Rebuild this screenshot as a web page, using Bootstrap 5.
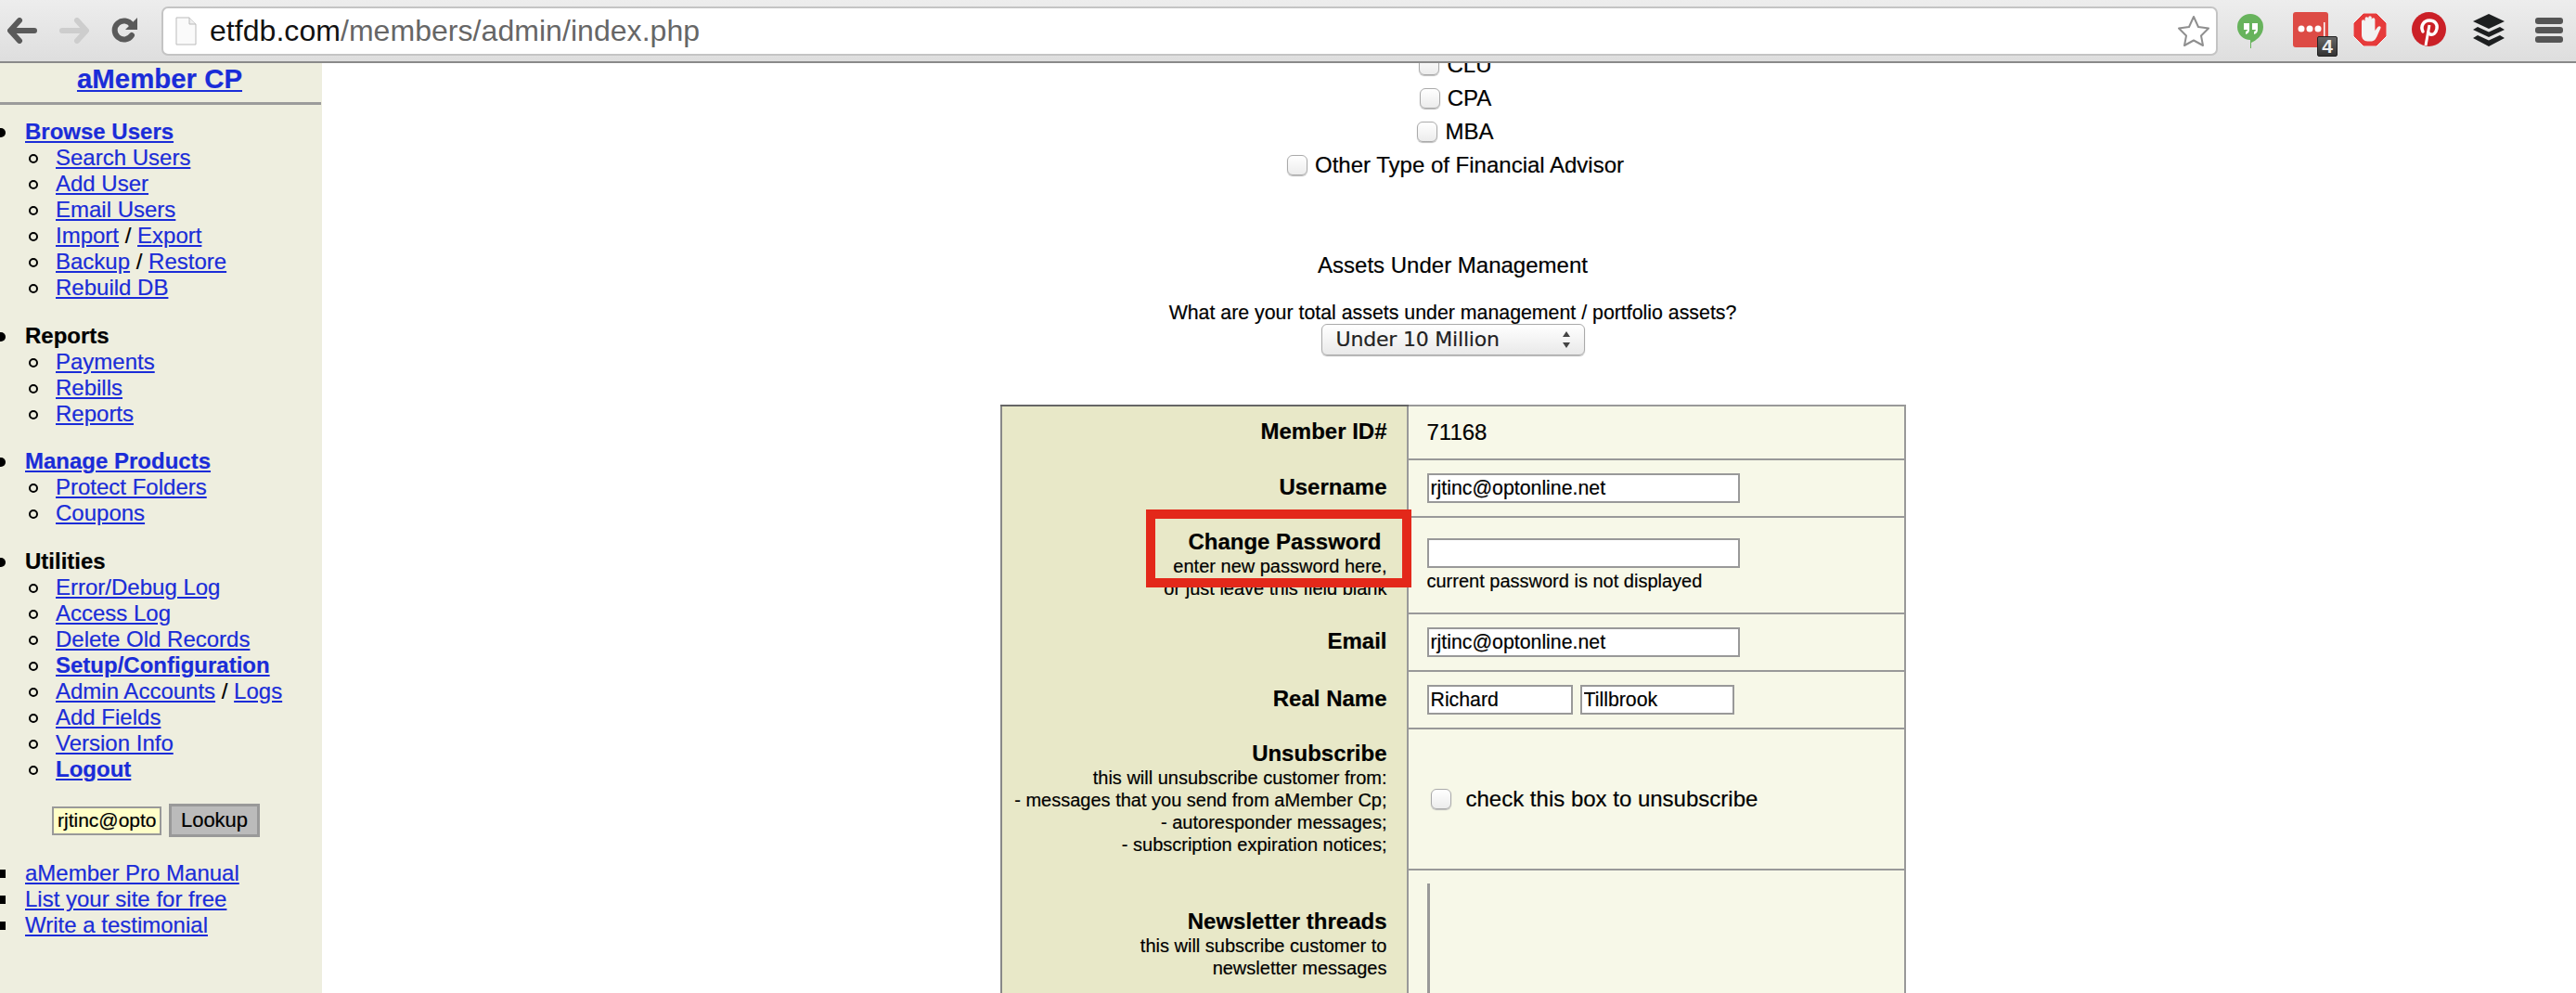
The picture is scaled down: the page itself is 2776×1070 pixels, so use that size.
<!DOCTYPE html>
<html lang="en">
<head>
<meta charset="utf-8">
<title>aMember CP</title>
<link href="https://cdn.jsdelivr.net/npm/bootstrap@5.3.0/dist/css/bootstrap.min.css" rel="stylesheet">
<style>
html,body{height:100%;overflow:hidden}
body{font-family:"Liberation Sans",Arial,sans-serif;font-size:24px;line-height:28px;color:#000;background:#fff;-webkit-text-stroke:.2px}
a{color:#1a2cd8}
.chrome-bar{height:68px;background:linear-gradient(#ededed,#dedede);border-bottom:2px solid #8a8a8a;padding-left:8px;padding-right:14px}
.nav-ico{flex:none;display:block}
.addr{width:2218px;height:53px;margin-left:24px;background:#fff;border:2px solid #c4c4c4;border-radius:7px;padding-left:13px;padding-right:6px}
.addr-url{font-size:32px;line-height:40px;margin-left:14px;color:#666;letter-spacing:.05px;-webkit-text-stroke:0}
.addr-url b{font-weight:400;color:#111}
.ext-row{margin-left:21px;height:68px}
.stage{height:1002px;overflow:hidden}
.side{flex:none;width:347px;height:100%;background:#eeeedf;overflow:hidden}
.side-title{font-size:29.4px;line-height:34px;font-weight:700;text-align:center;margin:0;padding-right:3px}
.side-rule{height:3px;background:#9b9b9b;margin:8px 1px 15px 0;opacity:1;border:0}
.lv1,.lv2,.lv3{list-style:none;margin:0}
.lv1{padding-left:27px;margin-bottom:23.5px}
.lv2{padding-left:33px}
.lv3{padding-left:27px}
.lv1>li,.lv2>li,.lv3>li{position:relative}
.lv1>li::before{content:"";position:absolute;left:-31px;top:10px;width:10px;height:10px;border-radius:50%;background:#000}
.lv2>li::before{content:"";position:absolute;left:-29px;top:10px;width:10px;height:10px;border-radius:50%;border:2px solid #000}
.lv3>li::before{content:"";position:absolute;left:-27px;top:10px;width:6px;height:9px;background:#000}
.lookup{padding-left:56px;margin-top:3px;margin-bottom:25px;gap:8px}
.lookup-in{width:118px;height:31px;background:#ffffc8;border:2px solid #999;font-size:21px;padding:0 4px;font-family:inherit;border-radius:0}
.lookup-btn{width:98px;height:36px;padding:0;background:#bbb;border:3px solid #999;border-radius:0;font-size:22px;line-height:28px;color:#000;-webkit-text-stroke:.2px}
.main-col{flex:1 1 auto;min-width:0;padding-left:8px;text-align:center;overflow:hidden}
.opt-line{height:36px;line-height:36px;gap:8px;padding-left:6px}
.opt-first{margin-top:-16px}
.opt-box{width:22px;height:22px;margin:0;flex:none;float:none;border:1.5px solid #aaa;border-radius:5px;background:linear-gradient(#fff,#ececec);box-shadow:0 1px 1px #bbb}
.assets-h{margin-top:76px;line-height:28px}
.assets-q{font-size:21.33px;line-height:26px;margin-top:24px}
.assets-sel{display:block;width:284px;height:34px;margin:-1px auto 0;padding:0 0 0 15px;font-family:"DejaVu Sans",sans-serif;font-size:22px;line-height:30px;letter-spacing:-.2px;color:#222;border:1.5px solid #aaa;border-radius:6px;box-shadow:0 1px 1px #bbb;appearance:none;background:url("data:image/svg+xml,%3Csvg xmlns='http://www.w3.org/2000/svg' width='10' height='18'%3E%3Cpath d='M5 0l4 6H1zM5 18l4-6H1z' fill='%23444'/%3E%3C/svg%3E") no-repeat right 14px center,linear-gradient(#fff,#e9e9e9)}
.member-tbl{width:976px;table-layout:fixed;border-collapse:collapse;margin:53px auto 0;text-align:left}
.member-tbl td{padding:0;vertical-align:middle}
.lab{width:438px;background:#e8e8c8;border-left:2px solid #888;border-top:2px solid #666;border-bottom:0;text-align:right;padding-right:21px!important;padding-bottom:3px!important;font-size:20px;line-height:24px;position:relative}
.lab-cont{border-top:0}
.lab strong{display:block;font-size:24px;line-height:28px}
.val{background:#f7f8e8;border:2px solid #999;padding-left:20px!important;font-size:24px}
.r1{height:58px}.r2{height:62px}.r3{height:104px}.r4{height:62px}.r5{height:62px}.r6{height:152px}.r7{height:300px}
.fld{display:block;height:32px;width:337px;border:2px solid #999;background:#fff;font-family:inherit;font-size:21.3px;padding:2px;color:#000;border-radius:0}
.fld-a{width:157px}.fld-b{width:166px}
.pw-note{font-size:20px;line-height:24px;margin-top:2px}
.red-mark{position:absolute;left:155px;top:-8px;width:286px;height:84px;border:10px solid #e3281a;pointer-events:none}
.pw-head{margin-right:6px}
.nl-cell{vertical-align:top!important;padding-top:42px!important}
.nl-list{display:block;width:3px;height:400px;background:#999;margin-top:14px}
.val-top{vertical-align:top!important}
.badge-num{position:absolute;left:26px;top:26px;width:22px;height:22px;background:linear-gradient(#666,#333);border:1px solid #222;border-radius:2px;color:#eee;font:700 21px/20px "Liberation Sans",sans-serif;text-align:center;-webkit-text-stroke:0}
.ext-pass{position:relative;width:48px;height:48px;margin-top:14px;margin-left:32px}
.ico-hang{margin-top:16px}
.ico-block{margin:15px 0 0 17px}
.ico-pin{margin:14px 0 0 27px}
.ico-buf{margin:16px 0 0 29px}
.ico-menu{margin:19px 0 0 33px}
</style>
</head>
<body>
<div class="chrome-bar d-flex align-items-center">
  <svg class="nav-ico" width="32" height="28" viewBox="0 0 32 28"><path d="M13 3L3 14l10 11M4 14h25" fill="none" stroke="#5a5a5a" stroke-width="6" stroke-linecap="round" stroke-linejoin="round"/></svg>
  <svg class="nav-ico ms-4" width="32" height="28" viewBox="0 0 32 28"><path d="M19 3l10 11-10 11M28 14H3" fill="none" stroke="#cdcdcd" stroke-width="6" stroke-linecap="round" stroke-linejoin="round"/></svg>
  <svg class="nav-ico ms-4" width="30" height="30" viewBox="0 0 30 30"><path d="M22 20a10 10 0 1 1 0-11" fill="none" stroke="#5a5a5a" stroke-width="6" stroke-linecap="round"/><path d="M28 1v13H15z" fill="#5a5a5a"/></svg>
  <div class="addr d-flex align-items-center">
    <svg width="23" height="31" viewBox="0 0 23 31"><path d="M1 1h14l7 7v22H1z" fill="#fafafa" stroke="#bbb"/><path d="M15 1v7h7" fill="#eee" stroke="#bbb"/></svg>
    <span class="addr-url"><b>etfdb.com</b>/members/admin/index.php</span>
    <svg class="ms-auto" width="36" height="35" viewBox="0 0 36 35"><path d="M18 2l5 11 11 1.500-8 8 2 10.500-10-5.500-10 5.500 2-10.500-8-8L13 13z" fill="#fff" stroke="#8f8f8f" stroke-width="2" stroke-linejoin="round"/></svg>
  </div>
  <div class="ext-row d-flex align-items-start">
    <svg class="ico-hang" width="28" height="37" viewBox="0 0 28 37"><path d="M14 0a14 14 0 0 1 14 14c0 9-8 15-13 17v6l-1 0v-9A14 14 0 0 1 14 0z" fill="#67b35c"/><path d="M7 10h6v7q0 4-4 5v-3q2-.5 2-2H7zM16 10h6v7q0 4-4 5v-3q2-.5 2-2h-4z" fill="#fff"/></svg>
    <div class="ext-pass">
      <svg width="38" height="38" viewBox="0 0 38 38" class="d-block"><rect width="38" height="38" rx="3" fill="#dd4b45"/><circle cx="9" cy="18" r="3.500" fill="#fff"/><circle cx="18" cy="18" r="3.500" fill="#fff"/><circle cx="27" cy="18" r="3.500" fill="#fff"/><rect x="33" y="11" width="1.500" height="15" fill="#fff"/></svg>
      <span class="badge-num">4</span>
    </div>
    <svg class="ico-block" width="36" height="36" viewBox="0 0 36 36"><path d="M11 0h14l11 11v14L25 36H11L0 25V11z" fill="#e63b3b" stroke="#f3f3f3"/><path d="M9 18v-9a1.800 1.800 0 0 1 3.600 0v6-9a1.800 1.800 0 0 1 3.600 0v9-10a1.800 1.800 0 0 1 3.600 0v10-8a1.800 1.800 0 0 1 3.600 0v12l3-4c2-2 4 0 3 1.500l-4 9c-1.500 3-3 5-7 5h-3c-4 0-6.400-3-6.400-7z" fill="#f2f2f2"/></svg>
    <svg class="ico-pin" width="37" height="37" viewBox="0 0 37 37"><circle cx="18.500" cy="18.500" r="18.500" fill="#cb2027"/><path d="M12 21c-3-6 1-12 7-12s9 4 8 9-4 7-7 6c-1.500-.5-2-1.500-2-2" fill="none" stroke="#fff" stroke-width="3.500" stroke-linecap="round"/><path d="M19 14l-4 22" fill="none" stroke="#fff" stroke-width="3"/></svg>
    <svg class="ico-buf" width="34" height="35" viewBox="0 0 34 35"><path d="M17 0l17 8-17 8L0 8z" fill="#1d1f20"/><path d="M5 14l12 5.500L29 14l5 3-17 8-17-8z" fill="#1d1f20"/><path d="M5 23l12 5.500L29 23l5 3-17 9-17-9z" fill="#1d1f20"/></svg>
    <svg class="ico-menu" width="30" height="28" viewBox="0 0 30 28"><rect width="30" height="7" y="1" rx="3" fill="#555"/><rect width="30" height="7" y="11" rx="3" fill="#555"/><rect width="30" height="7" y="21" rx="3" fill="#555"/></svg>
  </div>
</div>
<div class="stage d-flex">
  <nav class="side">
    <div class="side-title"><a href="#">aMember CP</a></div>
    <hr class="side-rule">
    <ul class="lv1"><li><a href="#"><strong>Browse Users</strong></a>
      <ul class="lv2">
        <li><a href="#">Search Users</a></li>
        <li><a href="#">Add User</a></li>
        <li><a href="#">Email Users</a></li>
        <li><a href="#">Import</a> / <a href="#">Export</a></li>
        <li><a href="#">Backup</a> / <a href="#">Restore</a></li>
        <li><a href="#">Rebuild DB</a></li>
      </ul></li></ul>
    <ul class="lv1"><li><strong>Reports</strong>
      <ul class="lv2">
        <li><a href="#">Payments</a></li>
        <li><a href="#">Rebills</a></li>
        <li><a href="#">Reports</a></li>
      </ul></li></ul>
    <ul class="lv1"><li><a href="#"><strong>Manage Products</strong></a>
      <ul class="lv2">
        <li><a href="#">Protect Folders</a></li>
        <li><a href="#">Coupons</a></li>
      </ul></li></ul>
    <ul class="lv1"><li><strong>Utilities</strong>
      <ul class="lv2">
        <li><a href="#">Error/Debug Log</a></li>
        <li><a href="#">Access Log</a></li>
        <li><a href="#">Delete Old Records</a></li>
        <li><a href="#"><strong>Setup/Configuration</strong></a></li>
        <li><a href="#">Admin Accounts</a> / <a href="#">Logs</a></li>
        <li><a href="#">Add Fields</a></li>
        <li><a href="#">Version Info</a></li>
        <li><a href="#"><strong>Logout</strong></a></li>
      </ul></li></ul>
    <form class="lookup d-flex align-items-center" onsubmit="return false">
      <input class="lookup-in" type="text" value="rjtinc@optonline.net">
      <button class="btn lookup-btn" type="button">Lookup</button>
    </form>
    <ul class="lv3">
      <li><a href="#">aMember Pro Manual</a></li>
      <li><a href="#">List your site for free</a></li>
      <li><a href="#">Write a testimonial</a></li>
    </ul>
  </nav>
  <main class="main-col">
    <div class="opt-line opt-first d-flex justify-content-center align-items-center"><input class="form-check-input opt-box" type="checkbox"><span>CLU</span></div>
    <div class="opt-line d-flex justify-content-center align-items-center"><input class="form-check-input opt-box" type="checkbox"><span>CPA</span></div>
    <div class="opt-line d-flex justify-content-center align-items-center"><input class="form-check-input opt-box" type="checkbox"><span>MBA</span></div>
    <div class="opt-line d-flex justify-content-center align-items-center"><input class="form-check-input opt-box" type="checkbox"><span>Other Type of Financial Advisor</span></div>
    <div class="assets-h">Assets Under Management</div>
    <div class="assets-q">What are your total assets under management / portfolio assets?</div>
    <select class="assets-sel"><option>Under 10 Million</option></select>
    <table class="member-tbl">
      <tr class="r1"><td class="lab"><strong>Member ID#</strong></td><td class="val">71168</td></tr>
      <tr class="r2"><td class="lab lab-cont"><strong>Username</strong></td><td class="val"><input class="fld" type="text" value="rjtinc@optonline.net"></td></tr>
      <tr class="r3"><td class="lab lab-cont"><strong class="pw-head">Change Password</strong>enter new password here,<br>or just leave this field blank<span class="red-mark"></span></td><td class="val"><input class="fld" type="text"><div class="pw-note">current password is not displayed</div></td></tr>
      <tr class="r4"><td class="lab lab-cont"><strong>Email</strong></td><td class="val"><input class="fld" type="text" value="rjtinc@optonline.net"></td></tr>
      <tr class="r5"><td class="lab lab-cont"><strong>Real Name</strong></td><td class="val"><div class="d-flex gap-2"><input class="fld fld-a" type="text" value="Richard"><input class="fld fld-b" type="text" value="Tillbrook"></div></td></tr>
      <tr class="r6"><td class="lab lab-cont"><strong>Unsubscribe</strong>this will unsubscribe customer from:<br>- messages that you send from aMember Cp;<br>- autoresponder messages;<br>- subscription expiration notices;</td><td class="val"><div class="d-flex align-items-center gap-2"><input class="form-check-input opt-box ms-1" type="checkbox"><span class="ms-2">check this box to unsubscribe</span></div></td></tr>
      <tr class="r7"><td class="lab lab-cont nl-cell"><strong>Newsletter threads</strong>this will subscribe customer to<br>newsletter messages</td><td class="val val-top"><span class="nl-list"></span></td></tr>
    </table>
  </main>
</div>
<script src="https://cdn.jsdelivr.net/npm/bootstrap@5.3.0/dist/js/bootstrap.bundle.min.js"></script>
</body>
</html>
